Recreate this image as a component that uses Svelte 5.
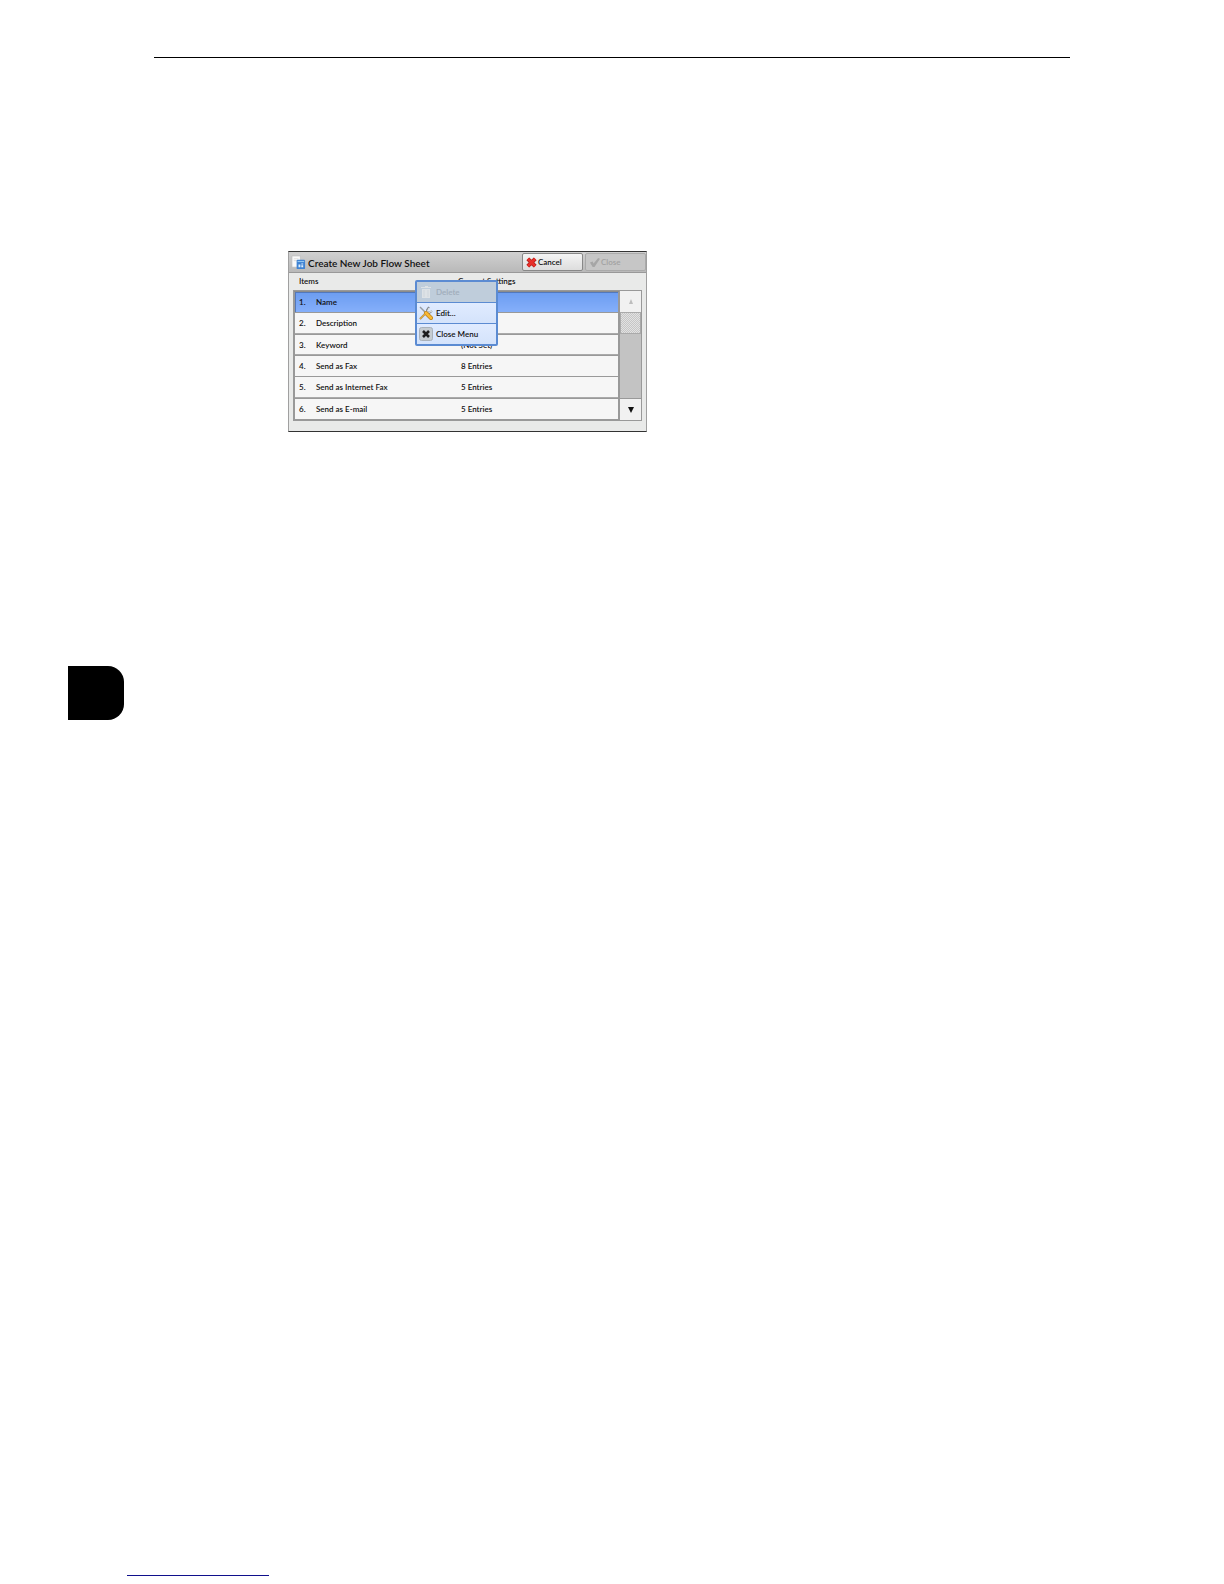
<script>
  const rows = [
    { name: 'Name', value: '' },
    { name: 'Description', value: '' },
    { name: 'Keyword', value: '(Not Set)' },
    { name: 'Send as Fax', value: '8 Entries' },
    { name: 'Send as Internet Fax', value: '5 Entries' },
    { name: 'Send as E-mail', value: '5 Entries' }
  ];
  let selected = $state(0);
</script>

<div class="page">
  <hr class="rule" />

  <section class="dialog" aria-label="Create New Job Flow Sheet">
    <header>
      <svg class="sheet" viewBox="0 0 16 16" aria-hidden="true">
        <path d="M1 1h9v12H1z" fill="#fafafa" stroke="#bbb" stroke-width=".7" />
        <path d="M3 4h5M3 6h4" stroke="#ddd" />
        <rect x="6" y="5" width="9" height="10" rx="1" fill="#3f83d3" />
        <path d="M7 7h7" stroke="#9fd0f5" />
        <path d="M8 10h2v3H8zM11 9h2v1h-2zM11 11h2v2h-2z" fill="#dff0ff" />
      </svg>
      <h1>Create New Job Flow Sheet</h1>
      <button class="action">
        <svg viewBox="0 0 12 12" aria-hidden="true">
          <path d="M2 2l8 8M10 2l-8 8" stroke="#a01a16" stroke-width="4.4" />
          <path d="M2 2l8 8M10 2l-8 8" stroke="#e8302a" stroke-width="3" />
        </svg>
        Cancel
      </button>
      <button class="action" disabled>
        <svg viewBox="0 0 12 12" aria-hidden="true">
          <path d="M1 6l3-1 1 2 5-6 2 1-6 9H4z" fill="#a6a6a6" />
        </svg>
        Close
      </button>
    </header>

    <div class="labels"><span>Items</span><span>Current Settings</span></div>

    <div class="list">
      <table>
        <tbody>
          {#each rows as row, i}
            <tr class:selected={selected === i} onclick={() => (selected = i)}>
              <td class="num">{i + 1}.</td>
              <td class="name">{row.name}</td>
              <td>{row.value}</td>
            </tr>
          {/each}
        </tbody>
      </table>
      <div class="scroll">
        <button disabled aria-label="Scroll up">
          <svg viewBox="0 0 6 6" aria-hidden="true"><path d="M3 0l2 5H1z" fill="#bdbdbd" /></svg>
        </button>
        <div class="thumb"></div>
        <div class="track"></div>
        <button aria-label="Scroll down">
          <svg viewBox="0 0 6 6" aria-hidden="true"><path d="M0 0h6L3 6z" fill="#111" /></svg>
        </button>
      </div>
    </div>

    <div class="menu">
      <button disabled>
        <svg viewBox="0 0 14 14" aria-hidden="true">
          <path d="M3 4h8v9H3zM2 2h10v1H2zM6 1h3v1H6z" fill="#dde2e6" />
          <path d="M5 5v7M9 5v7" stroke="#cfd6dc" />
        </svg>
        Delete
      </button>
      <button>
        <svg viewBox="0 0 14 14" aria-hidden="true">
          <path d="M1 13l6-6M10 1L8 4v2l2 1 3-2" fill="none" stroke="#858b90" stroke-width="2" />
          <path d="M1 13l7-7 2-4M9 7l4-2" fill="none" stroke="#e9edef" />
          <path d="M1 1l6 6" stroke="#969ca0" stroke-width="1.4" />
          <path d="M7 7l5 5" stroke="#b77b16" stroke-width="4" stroke-linecap="round" />
          <path d="M7 7l5 5" stroke="#f8b833" stroke-width="2.8" stroke-linecap="round" />
          <path d="M1 13l5-5" stroke="#e7ac35" stroke-width="1.4" />
        </svg>
        Edit...
      </button>
      <button>
        <svg viewBox="0 0 14 14" aria-hidden="true">
          <rect x=".5" y=".5" width="13" height="13" rx="2" fill="#c5cbd0" stroke="#a9b1ba" />
          <path d="M4 4l6 6M10 4l-6 6" stroke="#1d1d1d" stroke-width="2.6" />
        </svg>
        Close Menu
      </button>
    </div>
  </section>

  <div class="tab"></div>
  <hr class="footline" />
</div>

<style>
  :global(body) { margin: 0; background: #fff; }
  .page {
    box-sizing: border-box;
    min-height: 100vh;
    padding: 57px 68px 8px;
    display: flex;
    flex-direction: column;
    font-family: Lato, "Open Sans", sans-serif;
    color: #111;
  }
  .rule { align-self: stretch; margin: 0 86px; border: 0; border-top: 1px solid #000; }
  .dialog {
    position: relative;
    box-sizing: border-box;
    width: 100%;
    max-width: 359px;
    margin: 193px 0 0 220px;
    border: 1px solid #a0a0a0;
    border-top-color: #333;
    border-bottom-color: #333;
    background: #e9eae9;
    font-size: 8px;
    line-height: 12px;
    font-weight: 600;
  }
  button { font: inherit; color: inherit; margin: 0; padding: 0; }
  header {
    display: flex;
    align-items: center;
    gap: 2px;
    height: 20px;
    padding-left: 2px;
    border-bottom: 1px solid #999;
    background: linear-gradient(#d0d0d0, #b9b9b9);
  }
  .sheet { width: 15px; height: 15px; }
  h1 { flex: 1; margin: 0; font-size: 10px; line-height: 18px; padding-top: 2px; font-weight: 600; white-space: nowrap; }
  .action {
    box-sizing: border-box;
    display: flex;
    align-items: center;
    gap: 1px;
    width: 61px;
    height: 18px;
    padding-left: 3px;
    border: 1px solid #888;
    border-radius: 2px;
    background: linear-gradient(#f4f4f4, #ddd);
  }
  .action svg { width: 11px; height: 11px; }
  .action:disabled { background: #c6c6c6; border-color: #aaa; color: #a2a2a2; }
  .labels { display: grid; grid-template-columns: 159px 1fr; padding: 2px 0 3px 10px; }
  .list {
    display: flex;
    margin: 0 4px 10px;
    height: 129px;
    border: 1px solid #999;
  }
  table { flex: 1; border-collapse: collapse; background: #f6f6f6; border: 1px solid #999; }
  td { padding: 0; border-top: 1px solid #8c8c8c; border-bottom: 1px solid #999; }
  tr { box-shadow: inset 0 -1px #aaa; }
  .num { width: 17px; padding-left: 4px; }
  .name { width: 145px; }
  .selected { background: linear-gradient(#6b9cf0, #86b0fb); box-shadow: inset 0 0 0 1px #5278bb; }
  .scroll { display: flex; flex-direction: column; width: 21px; border-left: 1px solid #999; }
  .scroll button { height: 21px; border: 0; background: #f1f1f1; }
  .scroll svg { width: 6px; height: 6px; display: block; margin: auto; }
  .thumb {
    height: 20px;
    border: 1px solid #aaa;
    background: repeating-conic-gradient(#c6c6c6 0 25%, #e2e2e2 0 50%) 0 0 / 2px 2px;
  }
  .track { flex: 1; background: #c3c3c3; border-bottom: 1px solid #999; }
  .menu {
    position: absolute;
    top: 28px;
    left: 126px;
    display: grid;
    gap: 1px;
    width: 79px;
    border: 2px solid #5b8bd2;
    border-radius: 2px;
    background: #5b8bd2;
  }
  .menu button {
    display: flex;
    align-items: center;
    gap: 3px;
    height: 20px;
    padding-left: 2px;
    border: 0;
    background: linear-gradient(#e0ebff, #d4e3fb);
  }
  .menu button:disabled { background: #bfcddb; color: #a0acba; }
  .menu svg { width: 14px; height: 14px; }
  .tab { width: 56px; height: 54px; margin-top: 234px; border-radius: 0 16px 16px 0; background: #000; }
  .footline { width: 142px; margin: auto 0 0 59px; border: 0; border-top: 1px solid #10108c; }
</style>
